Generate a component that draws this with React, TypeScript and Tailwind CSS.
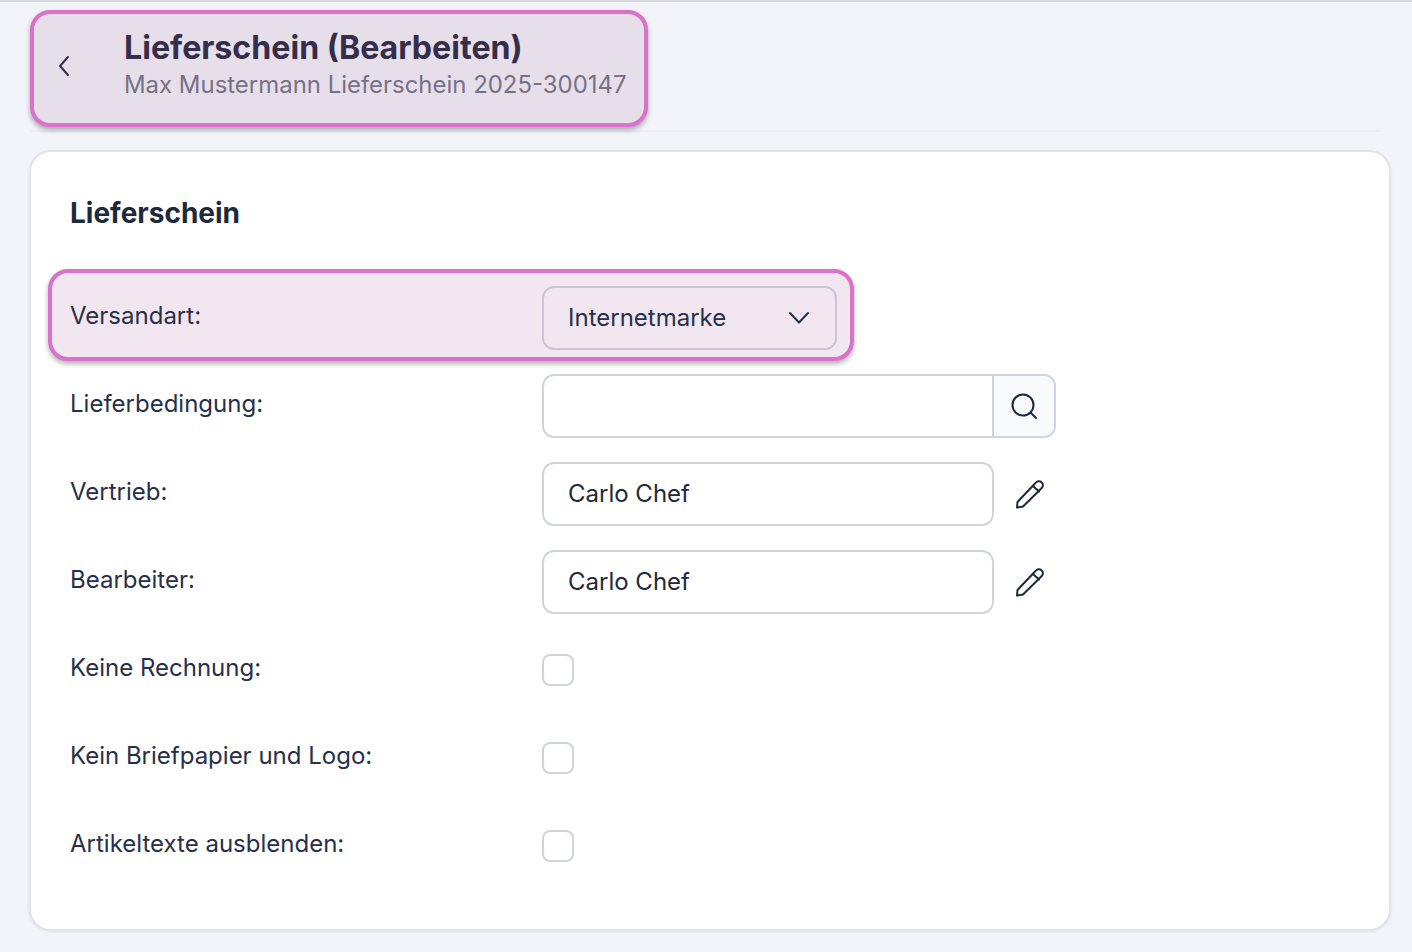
import React from 'react';

const font = { fontFamily: 'Inter, "Liberation Sans", sans-serif' };

const PencilIcon = () => (
  <svg width="32" height="32" viewBox="0 0 32 32" fill="none" stroke="#1e293b" strokeWidth="2" strokeLinecap="round" strokeLinejoin="round">
    <path d="M3 29.5 L3.5 24 L21.5 5 C23 3 25.5 2.5 27.5 4.2 C29.5 6 29.3 8.5 27.5 10.2 L9 28.5 Z" />
    <path d="M19 8 L25 13.5" />
  </svg>
);

const SearchIcon = () => (
  <svg width="28" height="28" viewBox="0 0 28 28" fill="none" stroke="#1e293b" strokeWidth="2" strokeLinecap="round">
    <circle cx="13" cy="13" r="10.5" />
    <path d="M20.5 20.5 L26 26" />
  </svg>
);

const Row = ({ label, children }: { label: string; children: React.ReactNode }) => (
  <div className="flex items-center h-16 mt-6 first:mt-0">
    <div className="w-[472px] pb-[4px] text-[24px] text-[#27304a]">{label}</div>
    {children}
  </div>
);

const Checkbox = () => <div className="w-8 h-8 rounded-lg border-2 border-[#d1d5db] bg-white" />;

const TextBox = ({ value }: { value: string }) => (
  <>
    <div className="w-[452px] h-16 flex items-center px-[24px] rounded-xl border-2 border-[#d1d5db] bg-white text-[24px] text-[#1f2937]">
      {value}
    </div>
    <div className="ml-5"><PencilIcon /></div>
  </>
);

export default function App() {
  return (
    <div style={font} className="w-[1412px] h-[952px] overflow-hidden bg-[#f3f4f9] border-t-2 border-[#d5dbe1]">
      {/* Header */}
      <div className="ml-[30px] mr-[32px] h-[130px] pt-2 border-b-2 border-[#eceef3]">
        <div className="w-[618px] h-[117px] flex rounded-[20px] border-4 border-[#db72c9] bg-[#e6dfea] shadow-[0_3px_5px_rgba(0,0,0,0.3)]">
          <div className="w-[90px] flex items-center pl-[23px] pb-[6px]">
            <svg width="14" height="24" viewBox="0 0 14 24" fill="none" stroke="#352d49" strokeWidth="2" strokeLinecap="round" strokeLinejoin="round">
              <path d="M11 3 L3 12 L11 21" />
            </svg>
          </div>
          <div>
            <h1 className="text-[32.15px] leading-[40px] mt-[14px] font-bold text-[#352d49]">Lieferschein (Bearbeiten)</h1>
            <p className="text-[23.95px] leading-[32px] mt-[1px] whitespace-nowrap text-[#787088]">Max Mustermann Lieferschein 2025-300147</p>
          </div>
        </div>
      </div>

      {/* Card */}
      <div className="ml-[29px] mt-[18px] w-[1362px] h-[781px] rounded-[22px] border-2 border-[#e2e4e9] bg-white pl-[39px] pt-[41px] shadow-[0_1px_3px_rgba(0,0,0,0.08)]">
        <h2 className="text-[28px] leading-[40px] font-bold text-[#1e293b]">Lieferschein</h2>

        {/* Versandart */}
        <div className="-ml-[22px] mt-[36px] w-[806px] h-[92px] flex items-center pl-[18px] pt-[6px] rounded-[20px] border-4 border-[#db72c9] bg-[#f2e6f0] shadow-[0_3px_5px_rgba(0,0,0,0.3)]">
          <div className="w-[472px] pb-[4px] text-[24px] text-[#27304a]">Versandart:</div>
          <div className="w-[295px] h-16 flex items-center justify-between pl-[24px] pr-[24px] rounded-xl border-2 border-[#cdc4d4] text-[24px] text-[#27304a]">
            Internetmarke
            <svg width="24" height="16" viewBox="0 0 24 16" fill="none" stroke="#27304a" strokeWidth="2" strokeLinecap="round" strokeLinejoin="round">
              <path d="M3 3 L12 12.5 L21 3" />
            </svg>
          </div>
        </div>

        <div className="mt-[13px]">
          <Row label="Lieferbedingung:">
            <div className="w-[514px] h-16 flex rounded-xl border-2 border-[#d1d5db] bg-white overflow-hidden">
              <div className="w-[450px] h-full border-r-2 border-[#d1d5db]" />
              <div className="flex-1 flex items-center justify-center bg-[#f9fafb]"><SearchIcon /></div>
            </div>
          </Row>
          <Row label="Vertrieb:"><TextBox value="Carlo Chef" /></Row>
          <Row label="Bearbeiter:"><TextBox value="Carlo Chef" /></Row>
          <Row label="Keine Rechnung:"><Checkbox /></Row>
          <Row label="Kein Briefpapier und Logo:"><Checkbox /></Row>
          <Row label="Artikeltexte ausblenden:"><Checkbox /></Row>
        </div>
      </div>
    </div>
  );
}
